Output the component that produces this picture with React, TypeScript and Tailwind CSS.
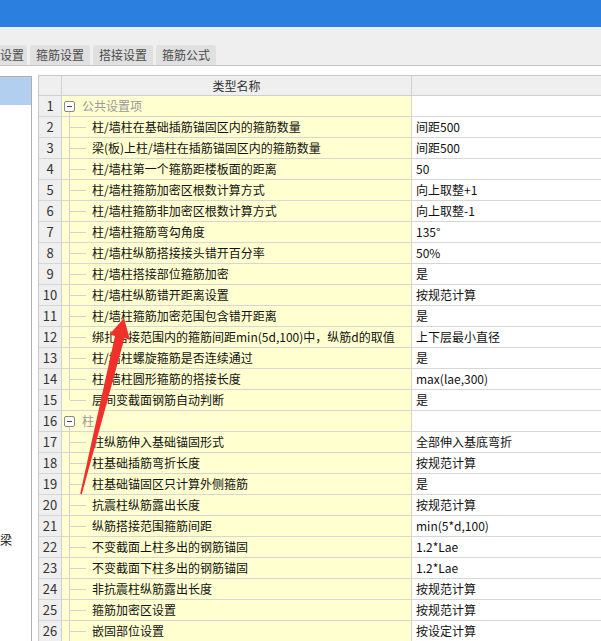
type Row = {
  no: number;
  name: string;
  value?: string;
  group?: boolean;
  last?: boolean;
};

const ROWS: Row[] = [
  { no: 1, name: '公共设置项', group: true },
  { no: 2, name: '柱/墙柱在基础插筋锚固区内的箍筋数量', value: '间距500' },
  { no: 3, name: '梁(板)上柱/墙柱在插筋锚固区内的箍筋数量', value: '间距500' },
  { no: 4, name: '柱/墙柱第一个箍筋距楼板面的距离', value: '50' },
  { no: 5, name: '柱/墙柱箍筋加密区根数计算方式', value: '向上取整+1' },
  { no: 6, name: '柱/墙柱箍筋非加密区根数计算方式', value: '向上取整-1' },
  { no: 7, name: '柱/墙柱箍筋弯勾角度', value: '135°' },
  { no: 8, name: '柱/墙柱纵筋搭接接头错开百分率', value: '50%' },
  { no: 9, name: '柱/墙柱搭接部位箍筋加密', value: '是' },
  { no: 10, name: '柱/墙柱纵筋错开距离设置', value: '按规范计算' },
  { no: 11, name: '柱/墙柱箍筋加密范围包含错开距离', value: '是' },
  { no: 12, name: '绑扎搭接范围内的箍筋间距min(5d,100)中，纵筋d的取值', value: '上下层最小直径' },
  { no: 13, name: '柱/墙柱螺旋箍筋是否连续通过', value: '是' },
  { no: 14, name: '柱/墙柱圆形箍筋的搭接长度', value: 'max(lae,300)' },
  { no: 15, name: '层间变截面钢筋自动判断', value: '是', last: true },
  { no: 16, name: '柱', group: true },
  { no: 17, name: '柱纵筋伸入基础锚固形式', value: '全部伸入基底弯折' },
  { no: 18, name: '柱基础插筋弯折长度', value: '按规范计算' },
  { no: 19, name: '柱基础锚固区只计算外侧箍筋', value: '是' },
  { no: 20, name: '抗震柱纵筋露出长度', value: '按规范计算' },
  { no: 21, name: '纵筋搭接范围箍筋间距', value: 'min(5*d,100)' },
  { no: 22, name: '不变截面上柱多出的钢筋锚固', value: '1.2*Lae' },
  { no: 23, name: '不变截面下柱多出的钢筋锚固', value: '1.2*Lae' },
  { no: 24, name: '非抗震柱纵筋露出长度', value: '按规范计算' },
  { no: 25, name: '箍筋加密区设置', value: '按规范计算' },
  { no: 26, name: '嵌固部位设置', value: '按设定计算' },
];

const TABS = ['箍筋设置', '搭接设置', '箍筋公式'];

const NameCell = function ({ row }: { row: Row }) {
  if (row.group) {
    return (
      <div className="relative flex h-full w-[350px] shrink-0 items-center border-r border-[#d6d6d6] bg-[#ffffd0]">
        <div className="absolute left-[2px] top-[5px] flex h-[11px] w-[11px] items-center justify-center rounded-[2px] border border-[#8a8a8a] bg-white">
          <div className="h-px w-[5px] bg-[#444]" />
        </div>
        <div className="absolute left-[7px] top-[16px] bottom-[-1px] w-px bg-[#d2d2d2]" />
        <span className="pl-[20px] text-[#9a9a9a]">{row.name}</span>
      </div>
    );
  }
  return (
    <div className="relative flex h-full w-[350px] shrink-0 items-center overflow-hidden whitespace-nowrap border-r border-[#d6d6d6] bg-[#ffffd0]">
      <div className={`absolute left-[7px] top-0 w-px bg-[#d2d2d2] ${row.last ? 'h-[10px]' : 'bottom-[-1px]'}`} />
      <div className="absolute left-[8px] top-[10px] h-px w-[16px] bg-[#d2d2d2]" />
      <span className="pl-[30px] text-[#111]">{row.name}</span>
    </div>
  );
};

const App = function () {
  return (
    <div className="relative h-[641px] w-[601px] overflow-hidden bg-white font-['Microsoft_YaHei','Noto_Sans_CJK_SC',sans-serif] text-[12px] leading-[16px]">
      <div className="h-[27px] bg-[#2b7fdf]" />
      <div className="flex h-[39px] items-end gap-[3px] border-b border-[#c4c4c4] bg-[#efefef]">
        <div className="flex h-[20px] w-[27px] items-center rounded-tr-[3px] bg-[#e0e0e0] text-[#4a4a4a]">设置</div>
        {TABS.map((tab) => (
          <div
            key={tab}
            className="flex h-[20px] w-[60px] items-center justify-center rounded-t-[3px] bg-[#e0e0e0] text-[#4a4a4a]"
          >
            {tab}
          </div>
        ))}
      </div>
      <div className="flex pt-[9px]">
        <div className="mt-px flex h-[600px] w-[32px] shrink-0 flex-col border-r border-t border-[#aeaeae]">
          <div className="h-[28px] w-full bg-[#b2cff0]" />
          <div className="mt-[427px] text-[#111]">梁</div>
        </div>
        <div className="ml-[6px] flex-1 border-l border-t border-[#c8c8c8]">
          <div className="flex h-[20px] border-b border-[#d0d0d0] bg-[#efefef] text-[#333]">
            <div className="w-[23px] shrink-0 border-r border-[#d0d0d0]" />
            <div className="flex w-[350px] shrink-0 items-center justify-center border-r border-[#d0d0d0]">
              类型名称
            </div>
            <div className="flex-1" />
          </div>
          {ROWS.map((row) => (
            <div key={row.no} className="flex h-[21px] border-b border-[#d6d6d6]">
              <div className="flex w-[23px] shrink-0 items-center justify-center border-r border-[#d0d0d0] bg-[#efefef] text-[13px] text-[#333]">
                {row.no}
              </div>
              <NameCell row={row} />
              <div className="flex flex-1 items-center whitespace-nowrap pl-[4px] text-[#111]">{row.value}</div>
            </div>
          ))}
        </div>
      </div>
      <svg className="pointer-events-none absolute left-0 top-0" width="601" height="641" viewBox="0 0 601 641">
        <polygon
          points="124,318 130,340 124.5,338 81.8,494.2 80.2,493.8 115,336 109.5,334.5"
          fill="#f0302a"
        />
      </svg>
    </div>
  );
};

export default App;
